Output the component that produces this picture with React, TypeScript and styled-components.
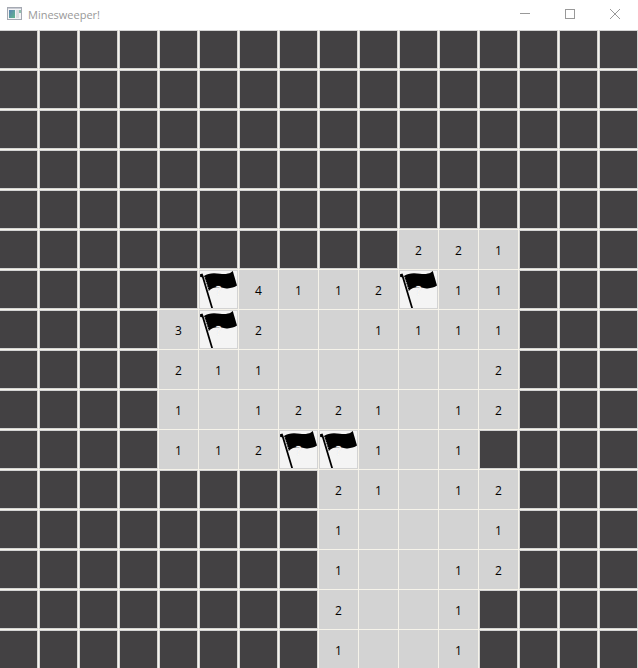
import React from "react";
import styled, { createGlobalStyle } from "styled-components";

const GlobalStyle = createGlobalStyle`
  * { box-sizing: border-box; }
  body { margin: 0; background: #ffffff; }
`;

const Window = styled.main`
  height: 100vh;
  display: flex;
  flex-direction: column;
  overflow: hidden;
  background: #ffffff;
  font-family: "Open Sans", "Noto Sans", sans-serif;
  font-size: 12px;
`;

const TitleBar = styled.header`
  display: flex;
  align-items: center;
  flex: 0 0 30px;
  padding: 0 1px 2px 7px;
  color: #999999;
`;

const Title = styled.h1`
  flex: 1;
  margin: 0 0 0 5px;
  padding-top: 2px;
  font-size: 11px;
  font-weight: 400;
  line-height: 16px;
`;

const WindowButton = styled.button`
  display: flex;
  align-items: center;
  justify-content: center;
  width: 45px;
  height: 28px;
  padding: 0;
  border: 0;
  background: transparent;
  color: #999999;
`;

const Board = styled.div`
  flex: 1;
  min-height: 0;
  display: grid;
  grid-template-columns: 38px repeat(15, 39px);
  grid-auto-rows: 39px;
  gap: 1px;
  align-content: start;
  justify-content: start;
  overflow: hidden;
  background: #f6f3ea;
`;

type Kind = "hidden" | "open" | "flag";

const fills: Record<Kind, string> = {
  hidden: "#434143",
  open: "#d3d3d3",
  flag: "#f4f4f4",
};

const Cell = styled.button<{ $kind: Kind }>`
  display: grid;
  place-items: center;
  padding: 2px 0 0;
  border: 1px solid #d3d3d3;
  background: ${(p) => fills[p.$kind]};
  color: #000000;
  font: inherit;
  line-height: 16px;

  &:nth-child(16n + 1) {
    border-left: 0;
  }
`;

const FlagCell = styled(Cell)`
  padding: 0;

  & > * {
    grid-area: 1 / 1;
  }
`;

const Mark = styled.span`
  padding-top: 2px;
  color: #ffffff;
  text-shadow: 0 0 1px #d3d3d3;
`;

const AppIcon = () => (
  <svg width="16" height="14" viewBox="0 0 16 14" aria-hidden="true">
    <defs>
      <linearGradient id="pane" x1="0" y1="0" x2="1" y2="1">
        <stop offset="0" stopColor="#5a82b4" />
        <stop offset="1" stopColor="#62b88c" />
      </linearGradient>
    </defs>
    <rect x="0.5" y="0.5" width="14" height="12" fill="#f4f4f6" stroke="#a5a9b2" />
    <rect x="1" y="1" width="13" height="1" fill="#c9ccd4" />
    <rect x="2" y="3" width="6" height="8" fill="url(#pane)" />
    <rect x="9" y="3" width="3" height="8" fill="#dcdde0" />
    <rect x="12" y="3" width="2" height="3" fill="#8fbfae" />
  </svg>
);

const FlagIcon = () => (
  <svg width="37" height="37" viewBox="0 0 37 37" aria-hidden="true">
    <path d="M0 3.2 L2.5 2.6 L3.5 5 L13 37 L11.2 37 L2 6.2 L0.2 6 Z" />
    <path d="M4 5 C8 2 14 1.8 20 2.8 C25 3.6 29 2.6 30.5 1.8 L32.8 0 L37 14.6 C34 17 29 17.8 25 17.2 C19 16 13 15.4 8.8 20 Z" />
    <path d="M4.6 6 L8.8 19" stroke="#f4f4f4" strokeWidth="0.6" strokeDasharray="1.2 1.4" fill="none" />
  </svg>
);

/* "#" covered, "." cleared, "F" flagged, digits are neighbouring mine counts */
const rows = [
  "################",
  "################",
  "################",
  "################",
  "################",
  "##########221###",
  "#####F4112F11###",
  "####3F2..1111###",
  "####211.....2###",
  "####1.1221.12###",
  "####112FF1.1####",
  "########21.12###",
  "########1...1###",
  "########1..12###",
  "########2..1####",
  "########1..1####",
];

export default function App() {
  return (
    <Window>
      <GlobalStyle />
      <TitleBar>
        <AppIcon />
        <Title>Minesweeper!</Title>
        <WindowButton aria-label="Minimize">
          <svg width="10" height="10" viewBox="0 0 10 10">
            <path d="M0 4.5H10" stroke="currentColor" />
          </svg>
        </WindowButton>
        <WindowButton aria-label="Maximize">
          <svg width="10" height="10" viewBox="0 0 10 10">
            <rect x="0.5" y="0.5" width="9" height="9" fill="none" stroke="currentColor" />
          </svg>
        </WindowButton>
        <WindowButton aria-label="Close">
          <svg width="10" height="10" viewBox="0 0 10 10">
            <path d="M0 0L10 10M10 0L0 10" stroke="currentColor" />
          </svg>
        </WindowButton>
      </TitleBar>
      <Board>
        {rows.flatMap((row, y) =>
          [...row].map((c, x) => {
            const key = `${x}-${y}`;
            if (c === "#") return <Cell key={key} $kind="hidden" aria-label="Covered" />;
            if (c === "F")
              return (
                <FlagCell key={key} $kind="flag" aria-label="Flagged">
                  <FlagIcon />
                  <Mark>?</Mark>
                </FlagCell>
              );
            return (
              <Cell key={key} $kind="open">
                {c === "." ? "" : c}
              </Cell>
            );
          })
        )}
      </Board>
    </Window>
  );
}
